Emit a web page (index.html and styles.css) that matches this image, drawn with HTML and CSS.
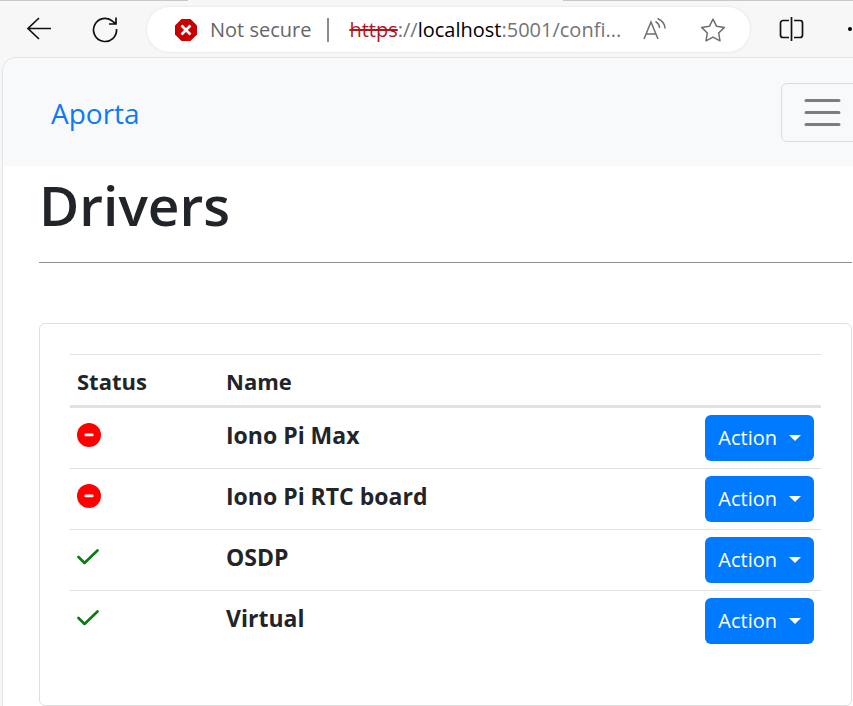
FILE: index.html
```html
<!DOCTYPE html>
<html lang="en">
<head>
<meta charset="utf-8">
<meta name="viewport" content="width=device-width, initial-scale=1">
<title>Drivers - Aporta</title>
<link rel="stylesheet" href="styles.css">
</head>
<body>
<header class="toolbar">
  <div class="tab-edge"><span></span><span></span></div>
  <div class="toolbar-row">
    <button class="tool" type="button" aria-label="Back">
      <svg width="26" height="26" viewBox="0 0 26 26"><path d="M25 11.500H2M13 1L2 11.500l11 10.500" /></svg>
    </button>
    <button class="tool" type="button" aria-label="Reload">
      <svg width="26" height="26" viewBox="0 0 26 26"><path d="M24.500 12a11.500 11.500 0 1 1-3.800-7.600L24 7M24 .500V7h-7" /></svg>
    </button>
    <div class="address">
      <svg class="warning" width="24" height="24" viewBox="0 0 24 24"><path fill="#c80000" d="M7.500 1h9L23 7.500v9L16.500 23h-9L1 16.500v-9z"/><path fill="none" stroke="#fff" stroke-width="2.600" d="M7.500 7.500l9 9M16.500 7.500l-9 9"/></svg>
      <span class="security">Not secure</span>
      <span class="divider"></span>
      <a class="url" href="#"><s>https</s>://<b>localhost</b>:5001/confi...</a>
      <button class="tool small" type="button" aria-label="Read aloud">
        <svg width="26" height="26" viewBox="0 0 26 26"><path d="M2 22L9 5 16 22M4.500 17h9M13.500 4.500c2.500 1.500 4 3.500 4 6.500M15.500 1.500C20 3.500 23 7 23 11.500"/></svg>
      </button>
      <button class="tool small" type="button" aria-label="Add to favorites">
        <svg width="26" height="26" viewBox="0 0 26 26"><path stroke-linejoin="round" d="M13 2.200l3.500 7 7.900 1.200-5.700 5.600 1.300 7.800-7-3.700-7 3.700L7.300 16l-5.700-5.600 7.900-1.200z"/></svg>
      </button>
    </div>
    <button class="tool split" type="button" aria-label="Split screen">
      <svg width="26" height="26" viewBox="0 0 26 26"><path d="M13.500 0v24M11 3.500H5a2.500 2.500 0 0 0-2.500 2.500v12a2.500 2.500 0 0 0 2.500 2.500H11M16 3.500h6a2.500 2.500 0 0 1 2.500 2.500v12a2.500 2.500 0 0 1-2.500 2.500H16"/></svg>
    </button>
    <button class="tool more" type="button" aria-label="More">
      <svg width="26" height="26" viewBox="0 0 26 26"><g fill="#000" stroke="none"><circle cx="3" cy="12" r="2"/><circle cx="12" cy="12" r="2"/><circle cx="21" cy="12" r="2"/></g></svg>
    </button>
  </div>
</header>
<div class="page">
  <nav class="navbar">
    <a class="brand" href="#">Aporta</a>
    <button class="toggler" type="button" aria-label="Toggle navigation">
      <svg width="45" height="45" viewBox="0 0 30 30"><path d="M4 7h22M4 15h22M4 23h22"/></svg>
    </button>
  </nav>
  <main>
    <h1>Drivers</h1>
    <hr>
    <section class="card">
      <table>
        <thead>
          <tr><th class="status" scope="col">Status</th><th scope="col">Name</th><th class="action"></th></tr>
        </thead>
        <tbody>
          <tr>
            <td><svg class="icon" role="img" aria-label="Stopped" width="24" height="24" viewBox="0 0 24 24"><circle cx="12" cy="12" r="12" fill="red"/><rect x="7.500" y="10.600" width="9" height="2.600" rx="1" fill="#fff"/></svg></td>
            <td class="name">Iono Pi Max</td>
            <td class="action"><button class="btn" type="button">Action</button></td>
          </tr>
          <tr>
            <td><svg class="icon" role="img" aria-label="Stopped" width="24" height="24" viewBox="0 0 24 24"><circle cx="12" cy="12" r="12" fill="red"/><rect x="7.500" y="10.600" width="9" height="2.600" rx="1" fill="#fff"/></svg></td>
            <td class="name">Iono Pi RTC board</td>
            <td class="action"><button class="btn" type="button">Action</button></td>
          </tr>
          <tr>
            <td><svg class="icon" role="img" aria-label="Running" width="24" height="24" viewBox="0 0 24 24"><path fill="none" stroke="#0a7a14" stroke-width="2.600" stroke-linecap="round" stroke-linejoin="round" d="M1.500 12L7.500 18 20.500 5.500"/></svg></td>
            <td class="name">OSDP</td>
            <td class="action"><button class="btn" type="button">Action</button></td>
          </tr>
          <tr>
            <td><svg class="icon" role="img" aria-label="Running" width="24" height="24" viewBox="0 0 24 24"><path fill="none" stroke="#0a7a14" stroke-width="2.600" stroke-linecap="round" stroke-linejoin="round" d="M1.500 12L7.500 18 20.500 5.500"/></svg></td>
            <td class="name">Virtual</td>
            <td class="action"><button class="btn" type="button">Action</button></td>
          </tr>
        </tbody>
      </table>
    </section>
  </main>
</div>
</body>
</html>
```
FILE: styles.css
```css
* { box-sizing: border-box; }

body {
  margin: 0;
  background: #f7f7f7;
  color: #212529;
  font-family: "Segoe UI", "Open Sans", "Noto Sans", sans-serif;
  font-size: 22px;
  line-height: 36px;
  overflow-x: hidden;
}

button { font: inherit; cursor: pointer; }
a { text-decoration: none; }
svg { display: block; }

/* Browser toolbar */
.tab-edge {
  display: flex;
  justify-content: space-between;
  height: 1px;
}
.tab-edge span { width: 22%; background: #c8c8c8; }
.tab-edge span:last-child { width: 34%; }

.toolbar-row {
  display: flex;
  align-items: center;
  padding: 6px 0 5px 26px;
  overflow: hidden;
}
.tool {
  flex: none;
  padding: 0;
  border: 0;
  background: none;
  margin-right: 40px;
}
.tool svg { fill: none; stroke: #111; stroke-width: 1.700; }
.tool.small { margin: 0 0 0 32px; }
.tool.small svg { stroke: #6e6e6e; stroke-width: 1.500; }
.tool.split { margin: 0 0 0 28px; }
.tool.more { margin: 0 -20px 0 43px; }

.address {
  flex: 1;
  min-width: 0;
  display: flex;
  align-items: center;
  height: 45px;
  padding: 0 24px 0 27px;
  margin-left: -11px;
  border-radius: 23px;
  background: #fff;
  box-shadow: 0 0 3px rgba(0, 0, 0, 0.1);
  font-size: 20px;
  color: #757575;
  white-space: nowrap;
}
.warning { flex: none; }
.security { margin-left: 12px; color: #666; }
.divider {
  flex: none;
  width: 2px;
  height: 24px;
  margin: 0 20px 0 16px;
  background: #8c8c8c;
}
.url { flex: 1; color: #757575; }
.url s { color: #b3141d; }
.url b { font-weight: 400; color: #000; }
.url + .tool.small { margin-left: 20px; }

/* Page */
.page {
  margin-left: 2px;
  border: solid #e2e4e6;
  border-width: 1px 0 0 1px;
  border-top-left-radius: 14px;
  background: #fff;
  overflow: hidden;
}
.navbar {
  display: flex;
  align-items: center;
  justify-content: space-between;
  padding: 25px 0 24px 48px;
  background: #f8f9fa;
}
.brand { font-size: 28px; color: #0f79f5; }
.toggler {
  margin-right: -11px;
  padding: 6px 18px;
  border: 1px solid #dcddde;
  border-radius: 6px;
  background: none;
}
.toggler path { fill: none; stroke: #7c7d7d; stroke-width: 2; stroke-linecap: round; }

main { padding: 0 1px 0 36px; }
h1 {
  margin: 3px 0 0;
  font-size: 55px;
  font-weight: 600;
  line-height: 72px;
}
hr {
  margin: 21px 0 60px;
  border: 0;
  border-top: 1px solid #909090;
}

.card {
  padding: 30px 30px 54px;
  border: 1px solid #dfdfdf;
  border-radius: 6px;
}
table {
  width: 100%;
  border-spacing: 0;
  font-weight: 700;
}
th, td {
  padding: 7px;
  border-top: 1px solid #dee2e6;
  text-align: left;
  vertical-align: top;
}
th { border-bottom: 3px solid #dee2e6; padding: 8px 7px 6px; }
td { font-size: 23px; }
tbody tr:first-child td { border-top: 0; }
.status { width: 149px; }
td.name { padding-top: 9px; }
td.action { text-align: right; }
.icon { margin-top: 8px; }

.btn {
  display: inline-flex;
  align-items: center;
  gap: 12px;
  height: 46px;
  padding: 0 13px;
  border: 0;
  border-radius: 6px;
  background: #007bff;
  color: #fff;
  font-size: 20px;
  font-weight: 400;
  vertical-align: top;
}
.btn::after {
  content: "";
  border: solid transparent;
  border-width: 6px 6px 0;
  border-top-color: #fff;
}
```
